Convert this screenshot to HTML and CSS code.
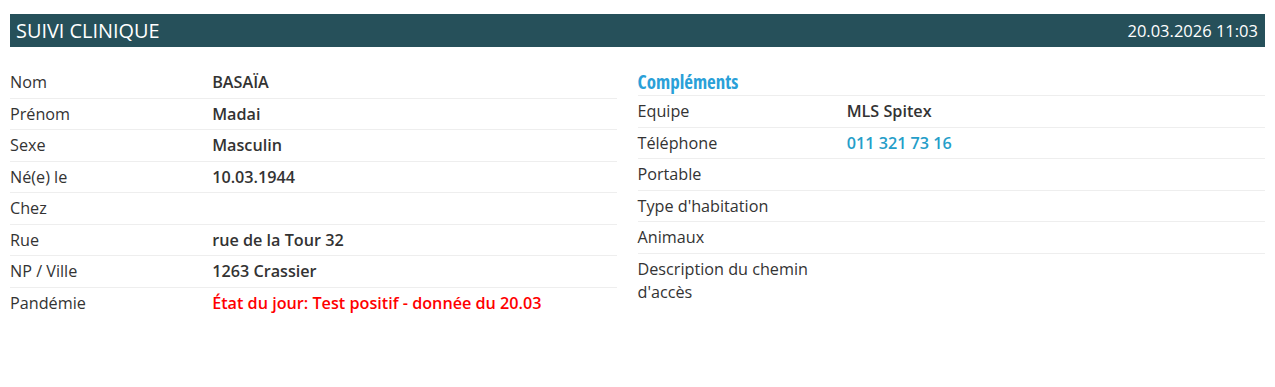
FILE: index.html
```html
<!DOCTYPE html>
<html lang="fr">
<head>
    <meta charset="UTF-8">
    <title>Suivi clinique</title>
    <link rel="stylesheet" href="styles.css">
</head>
<body>
    <div id="page">
        <div class="titlebar">
            <span class="title">SUIVI CLINIQUE</span>
            <span class="stamp">20.03.2026 11:03</span>
        </div>

        <div class="columns">
            <div class="col col-left">
                <div class="row"><div class="label">Nom</div><div class="value">BASAÏA</div></div>
                <div class="row"><div class="label">Prénom</div><div class="value">Madai</div></div>
                <div class="row"><div class="label">Sexe</div><div class="value">Masculin</div></div>
                <div class="row"><div class="label">Né(e) le</div><div class="value">10.03.1944</div></div>
                <div class="row"><div class="label">Chez</div><div class="value"></div></div>
                <div class="row"><div class="label">Rue</div><div class="value">rue de la Tour 32</div></div>
                <div class="row"><div class="label">NP / Ville</div><div class="value">1263 Crassier</div></div>
                <div class="row"><div class="label">Pandémie</div><div class="value alert">État du jour: Test positif - donnée du 20.03</div></div>
            </div>

            <div class="col col-right">
                <div class="section-title">Compléments</div>
                <div class="row"><div class="label">Equipe</div><div class="value">MLS Spitex</div></div>
                <div class="row"><div class="label">Téléphone</div><div class="value link">011 321 73 16</div></div>
                <div class="row"><div class="label">Portable</div><div class="value"></div></div>
                <div class="row"><div class="label">Type d'habitation</div><div class="value"></div></div>
                <div class="row"><div class="label">Animaux</div><div class="value"></div></div>
                <div class="row"><div class="label">Description du chemin d'accès</div><div class="value"></div></div>
            </div>
        </div>
    </div>
</body>
</html>
```

FILE: styles.css
```css
body {
    margin: 0;
    background: #fff;
    font-family: "Open Sans", "Noto Sans", sans-serif;
    font-size: 16.2px;
    color: #333;
}

#page {
    padding: 14px 10px;
}

.titlebar {
    display: flex;
    justify-content: space-between;
    align-items: center;
    height: 33px;
    padding: 0 7px 0 6px;
    background-color: #26505a;
    color: #fff;
}

.title {
    font-size: 19.9px;
}

.stamp {
    font-size: 16.5px;
}

.columns {
    display: grid;
    grid-template-columns: 1fr 1fr;
    margin-top: 20px;
}

.col-left {
    padding-right: 21px;
}

.row {
    display: flex;
    padding: 4px 0;
    line-height: 22.5px;
    border-top: 1px solid #eee;
}

.col-left .row:first-child {
    border-top: none;
}

.label {
    width: 33.333%;
    flex-shrink: 0;
    padding-right: 8px;
    box-sizing: border-box;
}

.label + .value {
    line-height: 22.5px;
}

.col-right .row:last-child {
    line-height: 23.5px;
}

.value {
    font-weight: 600;
}

.alert {
    color: #ff0000;
}

.link {
    color: #259ec9;
}

.section-title {
    padding: 4px 0 1px;
    line-height: 23px;
    font-size: 19px;
    font-weight: 700;
    font-stretch: 75%;
    color: #2aa0d8;
}
```
